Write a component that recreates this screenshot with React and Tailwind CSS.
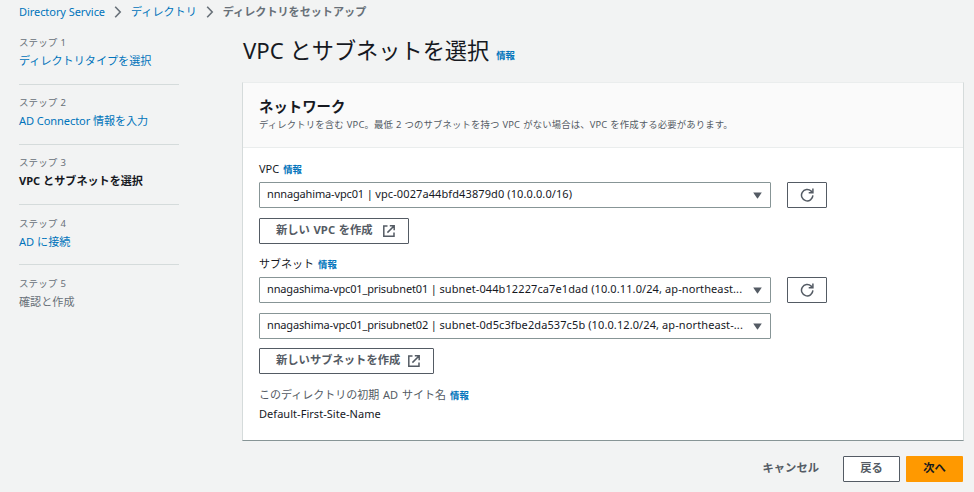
import React from "react";

const STEPS = [
  { label: "ステップ 1", title: "ディレクトリタイプを選択", tone: "text-[#0073bb]", pad: "pt-[10px]" },
  { label: "ステップ 2", title: "AD Connector 情報を入力", tone: "text-[#0073bb] tracking-[-0.1px]", pad: "pt-[10px]" },
  { label: "ステップ 3", title: "VPC とサブネットを選択", tone: "text-[#16191f] font-bold", pad: "pt-[10px]" },
  { label: "ステップ 4", title: "AD に接続", tone: "text-[#0073bb]", pad: "pt-[11px]" },
  { label: "ステップ 5", title: "確認と作成", tone: "text-[#687078]", pad: "pt-[11px]" },
];

function Chevron() {
  return (
    <svg className="mx-[9px] h-3 w-2 shrink-0" viewBox="0 0 8 12" fill="none" stroke="#687078" strokeWidth="1.6">
      <path d="M1.2 .8 6.2 6 1.2 11.2" />
    </svg>
  );
}

function Info({ gap = "ml-1" }) {
  return <a className={`${gap} text-[9.4px] font-bold text-[#0073bb]`}>情報</a>;
}

function Select({ name, detail }) {
  return (
    <div className="flex h-[26px] w-[512px] items-center justify-between rounded-[1px] border border-[#879596] bg-white pr-[8px] pl-[7px] text-[11px] leading-4 text-[#16191f]">
      <span className="pb-[2px] whitespace-nowrap">
        <span className="tracking-[-0.15px]">{name} | </span>
        <span className="tracking-[0.1px]">{detail}</span>
      </span>
      <svg className="h-[7px] w-[9px] shrink-0" viewBox="0 0 9 7" fill="#545b64">
        <path d="M.2 .5h8.6L4.9 6.3a.5.5 0 0 1-.8 0Z" />
      </svg>
    </div>
  );
}

function Refresh() {
  return (
    <button className="flex h-[26px] w-10 items-center justify-center rounded-[1px] border border-[#545b64] bg-white">
      <svg className="h-[14px] w-[14px]" viewBox="0 0 14 14" fill="none" stroke="#545b64" strokeWidth="1.5">
        <path d="M12.9 7.4a5.7 5.7 0 1 1-1.7-4.3l1.2 1.2" />
        <path d="M12.9 .6v4.1H8.7" />
      </svg>
    </button>
  );
}

function CreateButton({ width, children }) {
  return (
    <button className={`${width} flex h-[26px] items-center justify-between rounded-[1px] border border-[#545b64] bg-white pr-[13px] pl-4 text-[11.3px] font-bold text-[#545b64]`}>
      <span className="pb-[2px] [word-spacing:0.7px] whitespace-nowrap">{children}</span>
      <svg className="h-3 w-3 shrink-0" viewBox="0 0 12 12" fill="none" stroke="#545b64" strokeWidth="1.5">
        <path d="M4.5 1H.8v10.2H11V7.5M6.8 .8h4.4v4.4M11 1 4.4 7.6" />
      </svg>
    </button>
  );
}

export default function App() {
  return (
    <div className="h-[492px] w-[974px] overflow-hidden bg-[#f2f3f3] font-['Noto_Sans','Noto_Sans_CJK_JP',sans-serif] text-[11px] text-[#16191f]">
      <nav className="flex h-6 items-center pl-[19px] leading-4 whitespace-nowrap">
        <a className="tracking-[-0.06px] text-[#0073bb]">Directory Service</a>
        <Chevron />
        <a className="text-[11.1px] text-[#0073bb]">ディレクトリ</a>
        <Chevron />
        <span className="text-[11.1px] font-bold text-[#687078]">ディレクトリをセットアップ</span>
      </nav>
      <div className="flex">
        <aside className="w-[242px] shrink-0 pl-[19px]">
          <ol className="w-40 pt-px">
            {STEPS.map((s, i) => (
              <li key={s.label} className={`${s.pad} h-[60px] ${i < 4 ? "border-b border-[#d5dbdb]" : ""}`}>
                <div className="h-4 text-[9.5px] leading-4 tracking-[0.1px] [word-spacing:0.6px] text-[#687078]">{s.label}</div>
                <div className={`${s.tone} text-[11.1px] leading-5 whitespace-nowrap`}>{s.title}</div>
              </li>
            ))}
          </ol>
        </aside>
        <main className="w-[722px]">
          <h1 className="flex h-[58px] items-baseline pt-[11px] pl-px text-[22.2px] leading-8 whitespace-nowrap">
            VPC とサブネットを選択
            <Info gap="ml-[7px]" />
          </h1>
          <section className="h-[359px] border border-[#d5dbdb] border-t-[#eaeded] border-b-[#879596] bg-white">
            <header className="h-[65px] border-b border-[#eaeded] bg-[#fafafa] pt-[14px] pl-4">
              <h2 className="text-[14.4px] leading-5 font-bold">ネットワーク</h2>
              <p className="text-[9.4px] leading-4 tracking-[0.12px] [word-spacing:0.5px] whitespace-nowrap text-[#545b64]">
                ディレクトリを含む VPC。最低 2 つのサブネットを持つ VPC がない場合は、VPC を作成する必要があります。
              </p>
            </header>
            <div className="pt-3 pl-4">
              <div className="h-[22px] leading-[18px]">
                VPC<Info />
              </div>
              <div className="flex gap-4">
                <Select name="nnnagahima-vpc01" detail="vpc-0027a44bfd43879d0 (10.0.0.0/16)" />
                <Refresh />
              </div>
              <div className="pt-[10px]">
                <CreateButton width="w-[150px]">新しい VPC を作成</CreateButton>
              </div>
              <div className="mt-[11px] h-[22px] leading-[18px]">
                サブネット<Info />
              </div>
              <div className="flex gap-4">
                <Select
                  name="nnagashima-vpc01_prisubnet01"
                  detail="subnet-044b12227ca7e1dad (10.0.11.0/24, ap-northeast..."
                />
                <Refresh />
              </div>
              <div className="pt-[10px]">
                <Select
                  name="nnagashima-vpc01_prisubnet02"
                  detail="subnet-0d5c3fbe2da537c5b (10.0.12.0/24, ap-northeast-..."
                />
              </div>
              <div className="pt-[9px]">
                <CreateButton width="w-[175px]">新しいサブネットを作成</CreateButton>
              </div>
              <div className="mt-3 h-[19px] leading-[18px] [word-spacing:1px] text-[#545b64]">
                このディレクトリの初期 AD サイト名<Info />
              </div>
              <div className="leading-[18px] tracking-[0.04px]">Default-First-Site-Name</div>
            </div>
          </section>
          <footer className="flex justify-end pt-[15px] pr-px text-[11.3px] font-bold text-[#545b64]">
            <button className="mr-6 h-[26px] pb-[2px]">キャンセル</button>
            <button className="mr-1.5 h-[26px] w-[57px] rounded-[1px] border border-[#545b64] bg-white pb-[2px]">戻る</button>
            <button className="h-[26px] w-[57px] rounded-[1px] bg-[#ff9900] pb-[2px] text-[#16191f]">次へ</button>
          </footer>
        </main>
      </div>
    </div>
  );
}
